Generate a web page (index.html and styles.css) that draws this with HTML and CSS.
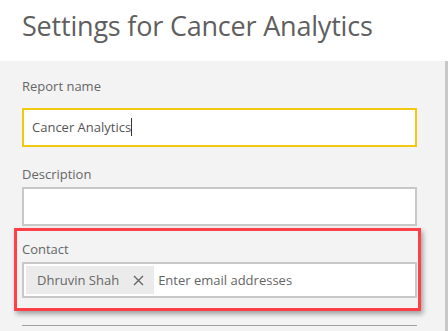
FILE: index.html
```html
<!DOCTYPE html>
<html lang="en">
<head>
  <meta charset="UTF-8">
  <title>Settings for Cancer Analytics</title>
  <link rel="stylesheet" href="styles.css">
</head>
<body>
  <div class="header">
    <h1>Settings for Cancer Analytics</h1>
  </div>

  <div class="panel">
    <div class="content">
      <label class="lbl first">Report name</label>
      <div class="field active">Cancer Analytics<span class="caret"></span></div>

      <label class="lbl">Description</label>
      <div class="field"></div>

      <div class="contact">
        <label class="lbl">Contact</label>
        <div class="field people">
          <span class="chip">Dhruvin Shah
            <svg width="11" height="11" viewBox="0 0 11 11"><path d="M1 1L10 10M10 1L1 10" stroke="#666" stroke-width="1.4" fill="none"/></svg>
          </span>
          <span class="hint">Enter email addresses</span>
        </div>
        <div class="highlight"></div>
      </div>

      <hr class="sep">
    </div>
    <div class="scrollbar"></div>
  </div>
</body>
</html>
```

FILE: styles.css
```css
body {
  margin: 0;
  font-family: "Open Sans", "Noto Sans", Arial, sans-serif;
  background: #fff;
  color: #666;
}
.header {
  height: 61px;
  padding-left: 22px;
  box-sizing: border-box;
}
h1 {
  margin: 0;
  padding-top: 7px;
  font-size: 27px;
  font-weight: normal;
  color: #5f5f5f;
  letter-spacing: -0.2px;
}
.panel {
  background: #f3f3f3;
  height: 270px;
  display: flex;
}
.content {
  flex: 1;
  padding: 0 28px 0 22px;
}
.scrollbar {
  width: 3px;
  background: #c8c8c8;
}
.lbl {
  display: block;
  font-size: 13px;
  color: #666;
  height: 18px;
  line-height: 18px;
  margin-top: 18px;
  margin-bottom: 4px;
}
.lbl.first {
  margin-top: 16px;
  margin-bottom: 13px;
}
.field {
  height: 39px;
  box-sizing: border-box;
  border: 2px solid #c8c8c8;
  background: #fff;
  font-size: 13px;
  color: #555;
  padding-left: 8px;
  display: flex;
  align-items: center;
}
.field.active {
  border-color: #f2c811;
  padding-bottom: 2px;
}
.caret {
  display: inline-block;
  width: 1px;
  height: 18px;
  background: #333;
}
.contact {
  position: relative;
}
.contact .lbl {
  margin-top: 14px;
}
.field.people {
  height: 36px;
  padding: 2px;
  gap: 4px;
}
.chip {
  display: flex;
  align-items: center;
  gap: 14px;
  height: 100%;
  background: #ebebeb;
  padding: 0 10px 0 11px;
  color: #666;
}
.hint {
  color: #666;
}
.highlight {
  position: absolute;
  left: -8px;
  right: -4px;
  top: -12px;
  bottom: -13px;
  border: 3px solid #ff4049;
  box-shadow: 2px 3px 5px rgba(0, 0, 0, 0.35);
}
.sep {
  margin: 27px 0 0;
  border: 0;
  border-top: 1px solid #a0a0a0;
}
```
